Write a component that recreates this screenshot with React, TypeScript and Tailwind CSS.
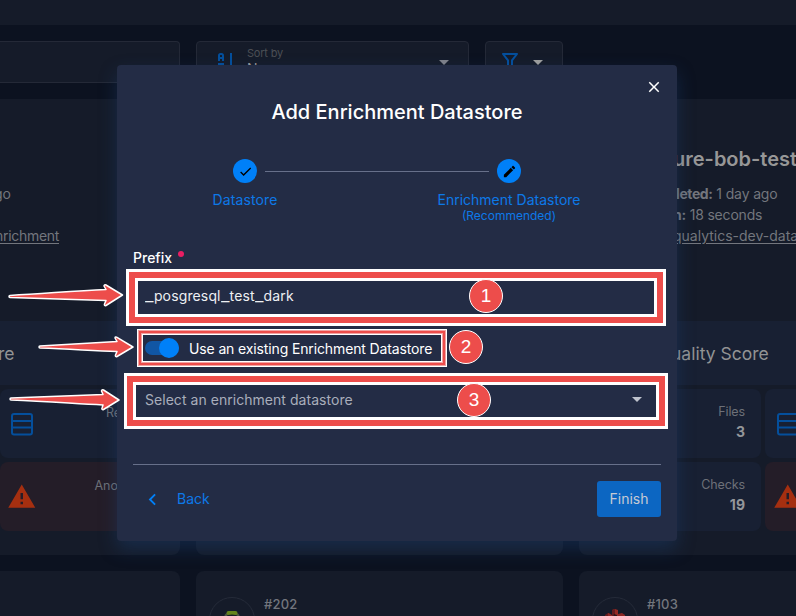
import React from "react";

const ICONS = {
  close:
    "M19,6.41L17.59,5L12,10.59L6.41,5L5,6.41L10.59,12L5,17.59L6.41,19L12,13.41L17.59,19L19,17.59L13.41,12L19,6.41Z",
  check: "M21,7L9,19L3.5,13.5L4.91,12.09L9,16.17L19.59,5.59L21,7Z",
  pencil:
    "M20.71,7.04C21.1,6.65 21.1,6 20.71,5.63L18.37,3.29C18,2.9 17.35,2.9 16.96,3.29L15.12,5.12L18.87,8.87M3,17.25V21H6.75L17.81,9.93L14.06,6.18L3,17.25Z",
  chevronLeft: "M15.41,16.58L10.83,12L15.41,7.41L14,6L8,12L14,18L15.41,16.58Z",
  menuDown: "M7,10L12,15L17,10H7Z",
  alert: "M13 14H11V9H13M13 18H11V16H13M1 21H23L12 2L1 21Z",
  filter:
    "M15,19.88C15.04,20.18 14.94,20.5 14.71,20.71C14.32,21.1 13.69,21.1 13.3,20.71L9.29,16.7C9.06,16.47 8.96,16.16 9,15.87V10.75L4.21,4.62C3.87,4.19 3.95,3.56 4.38,3.22C4.57,3.08 4.78,3 5,3V3H19V3C19.22,3 19.43,3.08 19.62,3.22C20.05,3.56 20.13,4.19 19.79,4.62L15,10.75V19.88M7.04,5L11,10.06V15.58L13,17.58V10.05L16.96,5H7.04Z",
};

function Icon({ name, size, className = "" }: { name: keyof typeof ICONS; size: number; className?: string }) {
  return (
    <svg width={size} height={size} viewBox="0 0 24 24" fill="currentColor" className={"shrink-0 " + className}>
      <path d={ICONS[name]} />
    </svg>
  );
}

function SortIcon() {
  return (
    <svg width="24" height="24" viewBox="0 0 24 24" fill="none" stroke="#044f9c" strokeWidth="2" className="shrink-0">
      <path d="M5 11V5.500Q5 4 6.500 4H7.500Q9 4 9 5.500V11M5 8H9M4 14H10M17 3V20" />
    </svg>
  );
}

function RecordsIcon() {
  return (
    <svg width="24" height="24" viewBox="0 0 24 24" fill="none" stroke="#044f9c" strokeWidth="2" className="shrink-0">
      <rect x="2" y="2" width="20" height="20.500" rx="2" />
      <path d="M2 9H22M2 15.500H22" />
    </svg>
  );
}

function Avatar({ kind }: { kind: "green" | "red" }) {
  return (
    <div className="flex h-[46px] w-[46px] shrink-0 justify-center rounded-full border border-[#252b39] pt-3">
      {kind === "green" ? (
        <svg width="20" height="20" viewBox="0 0 20 20" className="shrink-0">
          <ellipse cx="10" cy="5.500" rx="7.500" ry="3.500" fill="#4b5340" />
          <rect x="4.500" y="1" width="11" height="4" rx="2" fill="#65841b" />
          <ellipse cx="10" cy="6" rx="5" ry="1.500" fill="#171e24" />
        </svg>
      ) : (
        <svg width="22" height="20" viewBox="0 0 22 20" className="shrink-0 overflow-visible">
          <path d="M8 0L11 -1L14 0V8H8Z" fill="#962923" />
          <path d="M8 0L11 -1V8H8ZM1 5L4 3L7 4V10H1Z" fill="#651c1f" />
          <path d="M14 4L18 3L21 5V10H14ZM4 3L8 5V10H4Z" fill="#8b2724" />
          <path d="M10 4L13 5V8H9Z" fill="#2a1419" />
        </svg>
      )}
    </div>
  );
}

function Tile({ label, value }: { label: string; value: string }) {
  return (
    <div className="flex h-[69px] w-[182px] shrink-0 items-center justify-end rounded-lg bg-[#182033]">
      <div className="mb-[3px] flex flex-col items-end pr-4 leading-5">
        <span className="text-[12.5px] tracking-[-0.1px] text-[#6d7078]">{label}</span>
        <span className="text-[14px] font-bold text-[#94969a]">{value}</span>
      </div>
    </div>
  );
}

function Underscore() {
  return <span className="inline-block origin-left scale-x-[1.33] tracking-[2.5px]">_</span>;
}

function Backdrop() {
  return (
    <div className="flex h-full flex-col text-[#73767d]">
      <div className="h-[25px] shrink-0 bg-[#151b29]" />
      <div className="mt-4 flex h-[42px] shrink-0 gap-4">
        <div className="w-[180px] rounded-r border border-l-0 border-[#242937] bg-[#151b29]" />
        <div className="flex w-[273px] items-start rounded border border-[#242937] bg-[#151b29] pl-[17px] pr-3 pt-2">
          <SortIcon />
          <div className="ml-[9px] flex flex-col">
            <span className="text-[11px] leading-[7px] tracking-[-0.2px] text-[#4c4f55]">Sort by</span>
            <span className="mt-[2px] text-[14px] leading-[20px] text-[#999]">Name</span>
          </div>
          <Icon name="menuDown" size={24} className="ml-auto text-[#80828a]" />
        </div>
        <div className="flex w-[78px] items-start rounded border border-[#242937] bg-[#151b29] pl-3 pt-2">
          <Icon name="filter" size={24} className="text-[#044f9c]" />
          <Icon name="menuDown" size={24} className="ml-1 text-[#a0a09f]" />
        </div>
      </div>
      <div className="mt-4 grid shrink-0 grid-cols-[180px_367px_217px] gap-4">
        <div className="h-[456px] rounded-r-lg bg-[#151b29]">
          <div className="flex h-[222px] flex-col pt-[84px] text-[14px] leading-[21px]">
            <span className="ml-[-6px]">go</span>
            <span className="mt-[21px] ml-[-5px] tracking-[-0.3px] underline underline-offset-2">nrichment</span>
          </div>
          <div className="flex h-16 items-center bg-[#182033] pt-[2px] text-[17.500px] text-[#929394]">
            <span className="ml-[-2px]">re</span>
          </div>
          <div className="mt-1 flex h-[69px] items-center rounded-l-lg bg-[#182033] pl-[10px]">
            <RecordsIcon />
            <span className="mb-[21px] ml-[72px] text-[12.5px] text-[#6d7078]">Records</span>
          </div>
          <div className="mt-1 flex h-[69px] items-center rounded-l-lg bg-[#241d28] pl-[7px]">
            <Icon name="alert" size={29.5} className="text-[#a52f10]" />
            <span className="mb-5 ml-[58px] text-[12.5px] text-[#6d7078]">Anomalies</span>
          </div>
        </div>
        <div className="h-[456px] rounded-lg bg-[#151b29]" />
        <div className="h-[456px] overflow-hidden rounded-l-lg bg-[#151b29]">
          <div className="flex h-[222px] flex-col whitespace-nowrap pl-[94px] pt-[46px] text-[14px] leading-[21px]">
            <span className="text-[20px] font-semibold leading-7 text-[#979797]">ure-bob-test</span>
            <span className="mt-[10px] ml-[3px] tracking-[-0.15px]"><b className="font-bold tracking-[-0.4px]">leted:</b> 1 day ago</span>
            <span className="tracking-[-0.2px]"><b className="font-bold">n:</b> 18 seconds</span>
            <span className="underline underline-offset-2">qualytics-dev-data</span>
          </div>
          <div className="flex h-16 items-center bg-[#182033] pl-[92px] pt-[2px] text-[17.500px] text-[#929394]">uality Score</div>
          <div className="mt-1 flex gap-1">
            <Tile label="Files" value="3" />
            <div className="flex h-[69px] w-[31px] shrink-0 items-center rounded-l-lg bg-[#182033] pl-[11px]"><RecordsIcon /></div>
          </div>
          <div className="mt-1 flex gap-1">
            <Tile label="Checks" value="19" />
            <div className="flex h-[69px] w-[31px] shrink-0 items-center rounded-l-lg bg-[#241d28] pl-2">
              <Icon name="alert" size={29.5} className="text-[#a52f10]" />
            </div>
          </div>
        </div>
      </div>
      <div className="mt-4 grid h-[45px] shrink-0 grid-cols-[180px_367px_217px] gap-4">
        <div className="rounded-tr-lg bg-[#151b29]" />
        <div className="flex rounded-t-lg bg-[#151b29] pl-[13px] pt-[26px]">
          <Avatar kind="green" />
          <span className="-mt-px ml-[9px] text-[13px] font-medium leading-4 tracking-[0.2px]">#202</span>
        </div>
        <div className="flex rounded-tl-lg bg-[#151b29] pl-[13px] pt-[26px]">
          <Avatar kind="red" />
          <span className="-mt-px ml-[9px] text-[13px] font-medium leading-4 tracking-[0.2px]">#103</span>
        </div>
      </div>
    </div>
  );
}

function Dialog() {
  return (
    <div className="absolute left-[117px] top-[65px] flex h-[476px] w-[560px] flex-col rounded bg-[#232c45] px-4 text-white shadow-[0_8px_18px_0_rgba(30,70,125,0.38)]">
      <div className="flex h-8 items-end justify-end pb-px">
        <Icon name="close" size={18} className="-mr-[2px]" />
      </div>
      <h1 className="text-center text-[20px] font-medium leading-[30px]">Add Enrichment Datastore</h1>

      <div className="mt-8 flex h-6 items-center pl-[100px] text-black">
        <div className="flex h-6 w-6 items-center justify-center rounded-full bg-[#0080f8]"><Icon name="check" size={15} /></div>
        <div className="mx-2 h-px w-[224px] bg-[#67708a]" />
        <div className="flex h-6 w-6 items-center justify-center rounded-full bg-[#0080f8]"><Icon name="pencil" size={15} /></div>
      </div>
      <div className="mt-[7px] flex h-10 pl-[62px] text-center text-[14px] leading-5 text-[#0d79e8]">
        <div className="w-[100px] tracking-[0.1px]">Datastore</div>
        <div className="ml-[132px] w-[164px]">
          Enrichment Datastore
          <div className="text-[12px] leading-[11px]">(Recommended)</div>
        </div>
      </div>

      <div className="mt-[17px] flex h-5 items-center text-[14px] font-medium">
        Prefix
        <span className="mb-[7px] ml-[6px] h-[6px] w-[6px] rounded-full bg-[#e91e63]" />
      </div>
      <div className="mt-[9px] flex h-[38px] items-center whitespace-pre px-3 text-[14px] text-[#eef0f3]">
        <p className="tracking-[0.14px]">
          <Underscore />posgresql<Underscore />test<Underscore />dark
        </p>
      </div>
      <div className="mt-[14px] flex h-10 items-center pl-3 text-[14px]">
        <div className="flex h-[14px] w-[34px] items-center justify-end rounded-full bg-[#1156a4]">
          <span className="h-5 w-5 shrink-0 rounded-full bg-[#0080f8]" />
        </div>
        <span className="ml-[10px] tracking-[-0.13px]">Use an existing Enrichment Datastore</span>
      </div>
      <div className="mt-[12px] flex h-[38px] items-center justify-between pl-3 pr-3 text-[14px] tracking-[0.04px] text-[#a9aebb]">
        Select an enrichment datastore
        <Icon name="menuDown" size={24} className="text-[#bfc3cd]" />
      </div>

      <div className="mt-[46px] h-px bg-[#67708a]" />
      <div className="mt-4 flex h-9 items-center pl-2 text-[14px] text-[#0d79e8]">
        <Icon name="chevronLeft" size={23} className="text-[#0080f8]" />
        <span className="ml-[13px] pb-[2px]">Back</span>
        <button className="ml-auto flex h-9 w-16 items-center justify-center rounded-[3px] bg-[#0c66c2] pb-[2px] text-[#c5cad4]">Finish</button>
      </div>
    </div>
  );
}

function Marker({ n, className }: { n: number; className: string }) {
  return (
    <div className={"absolute flex h-[34px] w-[34px] items-center justify-center rounded-full border border-white bg-[#ed4d4b] pb-px text-[19px] leading-none text-white font-['Liberation_Sans',Arial,sans-serif] " + className}>
      {n}
    </div>
  );
}

function Frame({ className }: { className: string }) {
  return (
    <div className={"absolute border-[3px] border-white " + className}>
      <div className="h-full border-[6px] border-[#ed4d4b]">
        <div className="h-full border-[3px] border-white" />
      </div>
    </div>
  );
}

function Arrow({ d, width, className }: { d: string; width: number; className: string }) {
  return (
    <svg width={width} height="26" viewBox={`0 0 ${width} 26`} className={"absolute " + className}>
      <path d={d} fill="#ed4d4b" stroke="#fff" strokeWidth="1.500" strokeLinejoin="round" />
    </svg>
  );
}

export default function App() {
  return (
    <div className="relative h-[616px] w-[796px] overflow-hidden bg-[#0c1220] font-['Inter',sans-serif]">
      <Backdrop />
      <Dialog />
      <Frame className="left-[126px] top-[269px] h-[57px] w-[540px]" />
      <div className="absolute left-[137px] top-[329px] h-[38px] w-[310px] border border-white">
        <div className="h-full border border-[#f3a3a3]">
          <div className="h-full border-2 border-[#ed4d4b]">
            <div className="h-full border border-[#f3a3a3]">
              <div className="h-full border border-white" />
            </div>
          </div>
        </div>
      </div>
      <Frame className="left-[124px] top-[373px] h-[56px] w-[544px]" />
      <Arrow
        width={118}
        className="left-[7px] top-[282px]"
        d="M3 13.5C40 11.500 65 9 99 7.500L97 4C97 3 98 2.500 99 3L115.500 13L99 23.500C98 24 97 23.200 97.500 22L99 18.500C65 17.500 40 16.500 3 15.500C1.700 15.300 1.700 13.700 3 13.5Z"
      />
      <Arrow
        width={98}
        className="left-[37px] top-[334px]"
        d="M3 12C35 10 55 9 80 7.500L78 4C78 3 79 2.700 80 3.300L96 13L80 22.500C79 23 78 22.200 78.500 21L80 17.500C55 16.800 35 15 3 14C1.700 13.800 1.700 12.200 3 12Z"
      />
      <Arrow
        width={114}
        className="left-[8px] top-[387px]"
        d="M3 11C40 9.500 65 8.500 95 7.500L93.500 4C93.500 3 94.500 2.500 95.500 3L111 13L95.500 22.500C94.500 23 93.500 22.200 94 21L95 18C65 16.500 40 14.500 3 13C1.700 12.800 1.700 11.200 3 11Z"
      />
      <Marker n={1} className="left-[469px] top-[279px]" />
      <Marker n={2} className="left-[449px] top-[330px]" />
      <Marker n={3} className="left-[457px] top-[383px]" />
    </div>
  );
}
